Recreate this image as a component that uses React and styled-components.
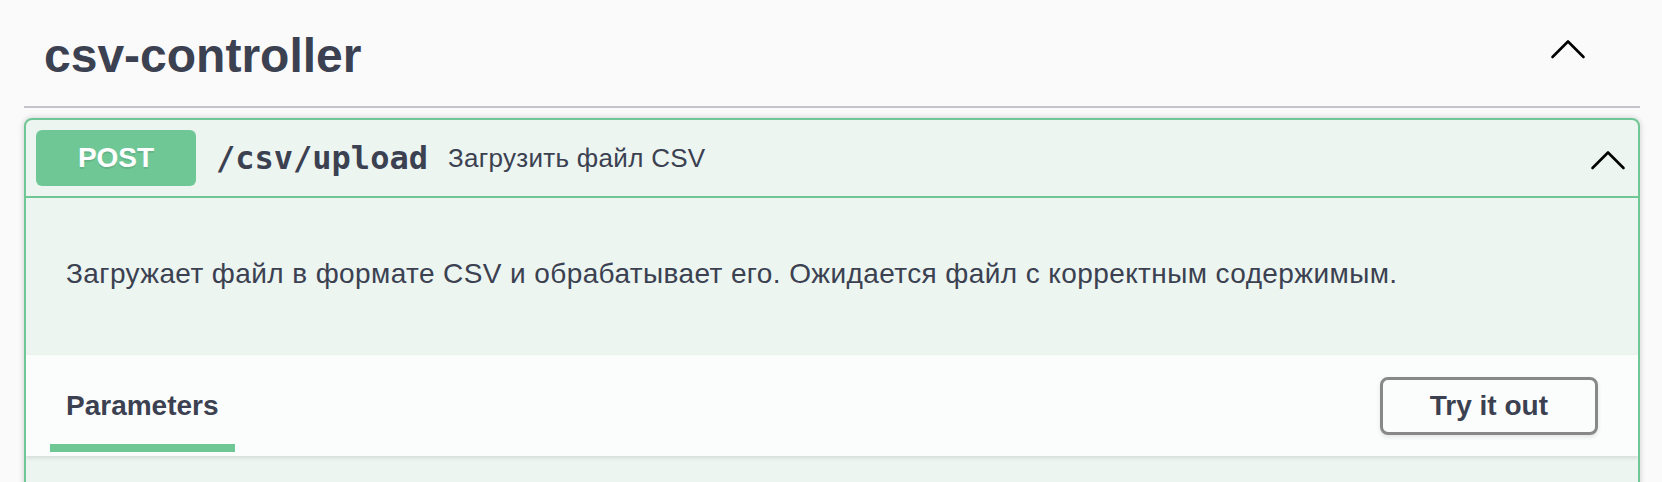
import styled, { createGlobalStyle } from "styled-components";

const GlobalStyle = createGlobalStyle`
  html, body {
    margin: 0;
    padding: 0;
    background: #fafafa;
  }
  body {
    font-family: "Liberation Sans", Arial, sans-serif;
    color: #3b4151;
  }
`;

const POST = "#70c796";

const Page = styled.div`
  padding: 0 22px 0 24px;
`;

const TagRow = styled.div`
  display: flex;
  align-items: flex-start;
  justify-content: space-between;
  box-sizing: border-box;
  height: 108px;
  padding: 0 52px 0 20px;
  border-bottom: 2px solid #c4c5ca;
`;

const TagTitle = styled.h3`
  margin: 28px 0 0;
  font-size: 48px;
  line-height: 1.15;
  font-weight: 700;
  color: #3b4151;
`;

const Chevron = styled.svg`
  flex: none;
  width: 40px;
  height: 40px;
  margin-top: ${(p) => p.$top || 0}px;
`;

const Arrow = ({ top }) => (
  <Chevron $top={top} viewBox="0 0 40 40">
    <polyline
      points="4.5,30 20,14.5 35.5,30"
      fill="none"
      stroke="#000"
      strokeWidth="2.6"
      strokeLinecap="round"
      strokeLinejoin="round"
    />
  </Chevron>
);

const Opblock = styled.div`
  margin-top: 10px;
  border: 2px solid ${POST};
  border-radius: 8px;
  background: #ecf5f0;
  box-shadow: 0 0 6px rgba(0, 0, 0, 0.19);
  overflow: hidden;
`;

const Summary = styled.div`
  display: flex;
  align-items: center;
  padding: 10px;
  border-bottom: 2px solid ${POST};
`;

const Method = styled.span`
  flex: none;
  display: flex;
  align-items: center;
  justify-content: center;
  width: 160px;
  height: 56px;
  border-radius: 6px;
  background: ${POST};
  color: #fff;
  font-size: 28px;
  font-weight: 700;
  text-shadow: 0 2px 0 rgba(0, 0, 0, 0.1);
`;

const Path = styled.span`
  padding: 0 20px;
  font-family: "DejaVu Sans Mono", "Liberation Mono", monospace;
  font-size: 32px;
  font-weight: 700;
  color: #3b4151;
`;

const SummaryText = styled.span`
  flex: 1;
  font-size: 26px;
  letter-spacing: 0.3px;
  color: #3b4151;
`;

const Description = styled.div`
  padding: 60px 40px 65px;
  font-size: 28px;
  line-height: 32px;
  letter-spacing: 0.4px;
  color: #3b4151;
  p {
    margin: 0;
  }
`;

const SectionHeader = styled.div`
  display: flex;
  align-items: center;
  justify-content: space-between;
  box-sizing: border-box;
  height: 101px;
  padding: 0 40px;
  background: rgba(255, 255, 255, 0.8);
  box-shadow: 0 2px 4px rgba(0, 0, 0, 0.1);
`;

const Tab = styled.h4`
  align-self: flex-end;
  margin: 0 0 4px -16px;
  padding: 0 16px 22px;
  border-bottom: 8px solid ${POST};
  font-size: 28px;
  line-height: 32px;
  font-weight: 700;
  color: #3b4151;
`;

const TryButton = styled.button`
  box-sizing: border-box;
  height: 58px;
  padding: 0 47px;
  border: 3px solid #888;
  border-radius: 8px;
  background: transparent;
  box-shadow: 0 2px 4px rgba(0, 0, 0, 0.1);
  font-family: "Liberation Sans", Arial, sans-serif;
  font-size: 28px;
  font-weight: 700;
  color: #3b4151;
`;

const Body = styled.div`
  height: 80px;
`;

export default function App() {
  return (
    <Page>
      <GlobalStyle />
      <TagRow>
        <TagTitle>csv-controller</TagTitle>
        <Arrow top={27} />
      </TagRow>
      <Opblock>
        <Summary>
          <Method>POST</Method>
          <Path>/csv/upload</Path>
          <SummaryText>Загрузить файл CSV</SummaryText>
          <Arrow />
        </Summary>
        <Description>
          <p>
            Загружает файл в формате CSV и обрабатывает его. Ожидается файл с
            корректным содержимым.
          </p>
        </Description>
        <SectionHeader>
          <Tab>Parameters</Tab>
          <TryButton>Try it out</TryButton>
        </SectionHeader>
        <Body />
      </Opblock>
    </Page>
  );
}
